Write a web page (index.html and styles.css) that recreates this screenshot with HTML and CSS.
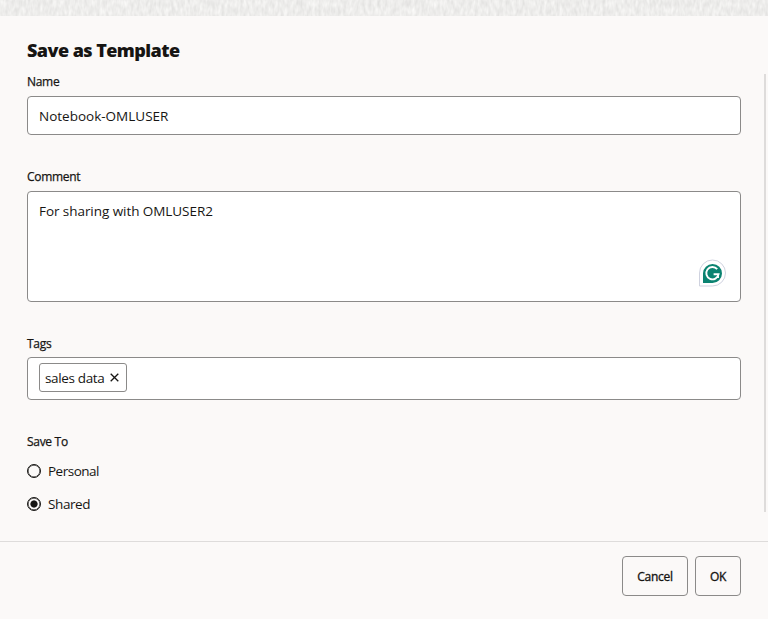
FILE: index.html
```html
<!DOCTYPE html>
<html lang="en">
<head>
<meta charset="utf-8">
<title>Save as Template</title>
<link rel="stylesheet" href="styles.css">
</head>
<body>
<div class="dialog">
  <svg class="texture" width="768" height="16" aria-hidden="true">
    <filter id="grain" x="0" y="0" width="100%" height="100%" color-interpolation-filters="sRGB">
      <feTurbulence type="fractalNoise" baseFrequency="0.32 0.13" numOctaves="2" seed="8"/>
      <feColorMatrix values="0.13 0 0 0 0.866  0.13 0 0 0 0.864  0.13 0 0 0 0.858  0 0 0 0 1"/>
    </filter>
    <rect width="768" height="16" filter="url(#grain)"/>
  </svg>
  <h1 class="title">Save as Template</h1>
  <main class="body">
    <section class="field-name">
      <div class="label">Name</div>
      <div class="box input"><span class="t-name">Notebook-OMLUSER</span></div>
    </section>
    <section class="field-comment">
      <div class="label">Comment</div>
      <div class="box area"><span class="t-comment">For sharing with OMLUSER2</span>
        <svg class="assistant" width="28" height="28" viewBox="0 0 28 28">
          <path d="M1.5 27V14A13 13 0 1 1 14.5 27Z" fill="#fff" stroke="#cfd2df"/>
          <path d="M5 24V14.3A9.5 9.5 0 1 1 14.5 24Z" fill="#0b8371"/>
          <path d="M19.2 10.1A6.2 6.2 0 1 0 20.6 15.2H15.6M20 15V19" fill="none" stroke="#fff" stroke-width="1.9"/>
        </svg>
      </div>
    </section>
    <section class="field-tags">
      <div class="label">Tags</div>
      <div class="box tags">
        <span class="chip"><span class="t-chip">sales data</span>
          <svg width="9" height="9" viewBox="0 0 9 9"><path d="M.7.7l7.6 7.6M8.3.7L.7 8.3" fill="none" stroke="#161513" stroke-width="1.3"/></svg>
        </span>
      </div>
    </section>
    <section class="field-save">
      <div class="label">Save To</div>
      <div class="option"><span class="radio"></span><span class="t-personal">Personal</span></div>
      <div class="option"><span class="radio checked"></span><span class="t-shared">Shared</span></div>
    </section>
    <div class="scrollbar"></div>
  </main>
  <footer class="footer">
    <button class="button cancel">Cancel</button>
    <button class="button ok">OK</button>
  </footer>
</div>
</body>
</html>
```
FILE: styles.css
```css
* { box-sizing: border-box; }
body {
  margin: 0;
  background: #fbf9f8;
  color: #161513;
  font: 400 13.5px/20px "Open Sans", "Noto Sans", sans-serif;
}
.dialog { height: 619px; display: flex; flex-direction: column; overflow: hidden; }
.texture { display: block; flex: none; }
.title {
  margin: 0;
  padding: 21px 27px 0;
  height: 58px;
  flex: none;
  font-size: 18px;
  line-height: 26px;
  font-weight: 800;
  letter-spacing: -0.55px;
}
.body { position: relative; height: 467px; flex: none; padding: 0 27px; }
.label {
  height: 22px;
  font-size: 12px;
  line-height: 16px;
  letter-spacing: -0.3px;
  -webkit-text-stroke: 0.25px #161513;
}
.box { background: #fff; border: 1px solid #8b8a89; border-radius: 4px; }
.field-name { height: 95px; }
.field-comment { height: 167px; }
.field-tags { height: 98px; }
.input { height: 39px; padding: 9px 11px; }
.area { position: relative; height: 111px; padding: 9px 11px; }
.t-name { letter-spacing: 0; }
.t-comment { letter-spacing: -0.06px; }
.t-chip { letter-spacing: -0.35px; white-space: nowrap; }
.t-personal { letter-spacing: -0.5px; }
.t-shared { letter-spacing: -0.4px; }
.assistant { position: absolute; right: 14px; bottom: 14px; }
.tags { height: 43px; padding: 5px 11px; margin-top: -1px; }
.chip {
  display: flex;
  align-items: center;
  justify-content: space-between;
  width: 88px;
  height: 29px;
  padding: 0 7px 0 5px;
  border: 1px solid #8b8a89;
  border-radius: 3px;
}
.option { display: flex; align-items: center; gap: 7px; height: 20px; margin-bottom: 13px; }
.field-save .label { height: 27px; }
.radio {
  width: 14px;
  height: 14px;
  border: 1px solid #161513;
  box-shadow: inset 0 0 0 0.5px #161513;
  border-radius: 50%;
}
.radio.checked { background: radial-gradient(circle, #161513 3.2px, transparent 4px); }
.scrollbar { position: absolute; right: 2px; top: 0; width: 2px; height: 438px; background: #dedcdb; }
.footer {
  flex: 1;
  display: flex;
  justify-content: flex-end;
  gap: 7px;
  padding: 14px 27px 0;
  border-top: 1px solid #dedcdb;
}
.button {
  height: 40px;
  padding: 1px 0 0;
  border: 1px solid #8b8a89;
  border-radius: 4px;
  background: transparent;
  color: #161513;
  font: 400 12px/16px "Open Sans", "Noto Sans", sans-serif;
  letter-spacing: -0.25px;
  -webkit-text-stroke: 0.35px #161513;
}
.cancel { width: 66px; }
.ok { width: 46px; }
```
